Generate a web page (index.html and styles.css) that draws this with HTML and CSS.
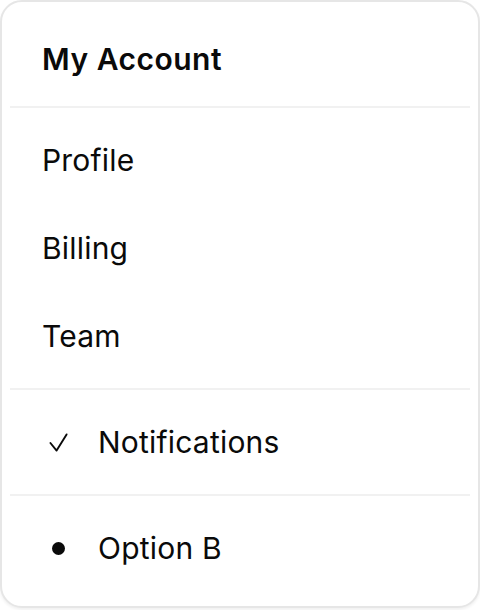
FILE: index.html
```html
<!DOCTYPE html>
<html lang="en">
<head>
  <meta charset="UTF-8">
  <link rel="stylesheet" href="styles.css">
</head>
<body>

  <div class="menu">
    <div class="menu-label">My Account</div>
    <div class="menu-sep"></div>
    <div class="menu-item">Profile</div>
    <div class="menu-item">Billing</div>
    <div class="menu-item">Team</div>
    <div class="menu-sep"></div>
    <div class="menu-item">
      <span class="indicator">
        <svg width="19" height="19" viewBox="0 0 20 20" fill="none" stroke="#0a0a0a" stroke-width="2" stroke-linecap="round" stroke-linejoin="round">
          <path d="M1.5 10.5 8 18.5 18.5 1.5"/>
        </svg>
      </span>
      Notifications
    </div>
    <div class="menu-sep"></div>
    <div class="menu-item">
      <span class="indicator"><span class="dot"></span></span>
      Option B
    </div>
  </div>

</body>
</html>
```

FILE: styles.css
```css
html, body {
  margin: 0;
  padding: 0;
  height: 100%;
  background-color: #fff;
  font-family: Inter, "Noto Sans", sans-serif;
  color: #0a0a0a;
}

.menu {
  box-sizing: border-box;
  height: 608px;
  padding: 8px;
  border: 2px solid #e6e6e6;
  border-radius: 22px;
  background-color: #fff;
  box-shadow: 0 2px 3px rgba(0, 0, 0, 0.06);
  display: flex;
  flex-direction: column;
}

.menu-label {
  height: 88px;
  padding: 10px 0 0 32px;
  box-sizing: border-box;
  display: flex;
  align-items: center;
  font-size: 30px;
  font-weight: 600;
  letter-spacing: 0.5px;
}

.menu-sep {
  height: 2px;
  margin: 8px 0;
  background-color: #f1f1f1;
  flex-shrink: 0;
}

.menu-item {
  height: 88px;
  padding-left: 32px;
  display: flex;
  align-items: center;
  font-size: 30px;
  letter-spacing: 0.2px;
  flex-shrink: 0;
}

.indicator {
  width: 32px;
  margin-right: 24px;
  display: flex;
  align-items: center;
  justify-content: center;
}

.dot {
  width: 13px;
  height: 13px;
  border-radius: 50%;
  background-color: #0a0a0a;
}
```
